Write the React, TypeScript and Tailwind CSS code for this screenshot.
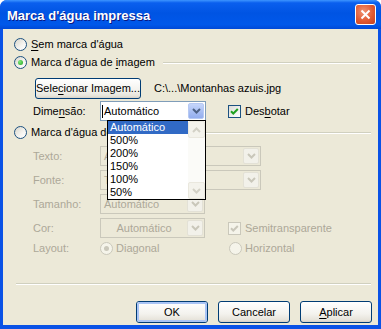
import React from "react";

function Radio({ checked = false, disabled = false }: { checked?: boolean; disabled?: boolean }) {
  return (
    <span
      className={
        disabled
          ? "flex h-[13px] w-[13px] shrink-0 items-center justify-center rounded-full border border-[#cac8bb] bg-[#f5f4ea]"
          : "flex h-[13px] w-[13px] shrink-0 items-center justify-center rounded-full border border-[#1c5180] bg-[linear-gradient(135deg,#d8d5cb,#f6f5f1_60%,#ffffff)]"
      }
    >
      {checked && (
        <span
          className={
            disabled
              ? "h-[5px] w-[5px] rounded-full bg-[#cac8bb]"
              : "h-[5px] w-[5px] rounded-full bg-[radial-gradient(circle_at_35%_35%,#7eea79,#21a121)]"
          }
        />
      )}
    </span>
  );
}

function Check({ disabled = false }: { disabled?: boolean }) {
  return (
    <span
      className={
        disabled
          ? "flex h-[13px] w-[13px] shrink-0 items-center justify-center border border-[#cac8bb] bg-[#f5f4ea]"
          : "flex h-[13px] w-[13px] shrink-0 items-center justify-center border border-[#1c5180] bg-[linear-gradient(135deg,#dcdcd7,#ffffff)]"
      }
    >
      <svg width="11" height="11" viewBox="0 0 11 11">
        <path
          d="M2 5.2 L4.3 7.5 L8.8 3"
          fill="none"
          stroke={disabled ? "#c9c7ba" : "#21a121"}
          strokeWidth="2"
        />
      </svg>
    </span>
  );
}

function Chevron({ color }: { color: string }) {
  return (
    <svg width="9" height="6" viewBox="0 0 9 6">
      <path d="M1 1 L4.5 4.5 L8 1" fill="none" stroke={color} strokeWidth="2" />
    </svg>
  );
}

function ChevronUp({ color }: { color: string }) {
  return (
    <svg width="9" height="6" viewBox="0 0 9 6">
      <path d="M1 5 L4.5 1.5 L8 5" fill="none" stroke={color} strokeWidth="2" />
    </svg>
  );
}

function U({ children }: { children: React.ReactNode }) {
  return <span className="underline underline-offset-[2px] decoration-[1px]">{children}</span>;
}

function XPButton({ children, def = false }: { children: React.ReactNode; def?: boolean }) {
  return (
    <div className="flex h-[22px] w-[72px] items-center justify-center rounded-[3px] border border-[#003c74] bg-[linear-gradient(180deg,#ffffff,#f3f2ed_60%,#e6e3da_90%,#d6d0c5)]">
      <div
        className={
          def
            ? "flex h-full w-full items-center justify-center rounded-[2px] border-[2px] border-[#a9c4f5]"
            : "flex h-full w-full items-center justify-center"
        }
      >
        {children}
      </div>
    </div>
  );
}

export default function App() {
  return (
    <div className="flex h-[329px] w-[381px] flex-col overflow-hidden rounded-t-[7px] bg-[#0a52e6] font-['Liberation_Sans',Arial,sans-serif] text-[11px] leading-[13px] text-black">
      {/* Title bar */}
      <div className="flex h-[29px] shrink-0 items-center bg-[linear-gradient(180deg,#3d95ff_0%,#0a5fee_10%,#0054e3_45%,#0058ea_85%,#0049d6_100%)]">
        <span className="pl-[7px] pt-[1px] text-[13px] font-bold text-white [text-shadow:1px_1px_#0a1883]">
          Marca d'água impressa
        </span>
        <div className="ml-auto mr-[5px] flex h-[21px] w-[21px] items-center justify-center rounded-[3px] border border-white bg-[radial-gradient(circle_at_40%_35%,#f09473,#e15a33_55%,#c2401d)]">
          <svg width="11" height="11" viewBox="0 0 11 11">
            <path d="M1.5 1.5 L9.5 9.5 M9.5 1.5 L1.5 9.5" stroke="white" strokeWidth="2" />
          </svg>
        </div>
      </div>

      {/* Body */}
      <div className="mx-[3px] mb-[4px] flex flex-1 flex-col bg-[#ece9d8] pt-[9px]">
        {/* R1 */}
        <div className="flex h-[13px] items-center pl-[11px]">
          <Radio />
          <span className="ml-[4px]">
            <U>S</U>em marca d'água
          </span>
        </div>
        {/* R2 */}
        <div className="mt-[5px] flex h-[13px] items-center pl-[11px]">
          <Radio checked />
          <span className="ml-[4px] whitespace-nowrap">
            Marca d'água de <U>i</U>magem
          </span>
          <div className="ml-[8px] mr-[7px] h-[2px] flex-1 border-t border-b border-t-[#d0d0bf] border-b-white" />
        </div>
        {/* R3 */}
        <div className="mt-[9px] flex h-[21px] items-center pl-[32px]">
          <div className="flex h-[21px] w-[106px] items-center justify-center rounded-[3px] border border-[#003c74] bg-[linear-gradient(180deg,#ffffff,#f3f2ed_60%,#e6e3da_90%,#d6d0c5)]">
            Sele<U>c</U>ionar Imagem...
          </div>
          <span className="ml-[13px] whitespace-nowrap">C:\...\Montanhas azuis.jpg</span>
        </div>
        {/* R4 */}
        <div className="mt-[2px] flex h-[20px] items-center">
          <div className="w-[97px] pl-[30px]">
            Dime<U>n</U>são:
          </div>
          <div className="relative flex h-[20px] w-[106px] items-center border border-[#7f9db9] bg-white">
            <span className="relative flex-1 pl-[3px]">
              <span className="absolute left-[1px] top-[0px] h-[13px] w-[1px] bg-black" />
              Automático
            </span>
            <div className="mr-[1px] flex h-[16px] w-[16px] items-center justify-center rounded-[2px] border border-[#b6c9f3] bg-[linear-gradient(180deg,#c6d6fb,#a5bcf2_60%,#93aeee)]">
              <Chevron color="#4d6185" />
            </div>
            {/* dropdown list */}
            <div className="absolute left-[6px] top-[18px] z-10 flex h-[80px] w-[99px] border border-black bg-white">
              <div className="flex flex-1 flex-col">
                <div className="h-[13px] bg-[#316ac5] pl-[2px] text-white">Automático</div>
                <div className="h-[13px] pl-[2px]">500%</div>
                <div className="h-[13px] pl-[2px]">200%</div>
                <div className="h-[13px] pl-[2px]">150%</div>
                <div className="h-[13px] pl-[2px]">100%</div>
                <div className="h-[13px] pl-[2px]">50%</div>
              </div>
              <div className="flex w-[17px] flex-col justify-between bg-[#fbfbf8]">
                <div className="flex h-[17px] w-[17px] items-center justify-center rounded-[2px] border border-[#eae8de] bg-[#f4f3ec]">
                  <ChevronUp color="#d3d1c6" />
                </div>
                <div className="flex h-[17px] w-[17px] items-center justify-center rounded-[2px] border border-[#eae8de] bg-[#f4f3ec]">
                  <Chevron color="#d3d1c6" />
                </div>
              </div>
            </div>
          </div>
          <div className="ml-[22px] flex items-center">
            <Check />
            <span className="ml-[4px]">
              Des<U>b</U>otar
            </span>
          </div>
        </div>
        {/* R5 */}
        <div className="mt-[5px] flex h-[13px] items-center pl-[11px]">
          <Radio />
          <span className="ml-[4px] whitespace-nowrap">
            Marca d'água de <U>t</U>exto
          </span>
          <div className="ml-[8px] mr-[7px] h-[2px] flex-1 border-t border-b border-t-[#d0d0bf] border-b-white" />
        </div>
        {/* R6 Texto */}
        <div className="mt-[7px] flex h-[20px] items-center text-[#aca899]">
          <div className="w-[97px] pl-[30px]">Texto:</div>
          <div className="flex h-[20px] w-[161px] items-center border border-[#cac8bb] bg-[#ece9d8]">
            <span className="flex-1 whitespace-nowrap pl-[3px]">ASAP</span>
            <div className="mr-[1px] flex h-[16px] w-[16px] items-center justify-center rounded-[2px] border border-[#e3e1d6] bg-[#f2f1ea]">
              <Chevron color="#c9c7ba" />
            </div>
          </div>
        </div>
        {/* R7 Fonte */}
        <div className="mt-[4px] flex h-[20px] items-center text-[#aca899]">
          <div className="w-[97px] pl-[30px]">Fonte:</div>
          <div className="flex h-[20px] w-[161px] items-center border border-[#cac8bb] bg-[#ece9d8]">
            <span className="flex-1 whitespace-nowrap pl-[3px]">Times New Roman</span>
            <div className="mr-[1px] flex h-[16px] w-[16px] items-center justify-center rounded-[2px] border border-[#e3e1d6] bg-[#f2f1ea]">
              <Chevron color="#c9c7ba" />
            </div>
          </div>
        </div>
        {/* R8 Tamanho */}
        <div className="mt-[4px] flex h-[20px] items-center text-[#aca899]">
          <div className="w-[97px] pl-[30px]">Tamanho:</div>
          <div className="flex h-[20px] w-[105px] items-center border border-[#cac8bb] bg-[#ece9d8]">
            <span className="flex-1 whitespace-nowrap pl-[3px]">Automático</span>
            <div className="mr-[1px] flex h-[16px] w-[16px] items-center justify-center rounded-[2px] border border-[#e3e1d6] bg-[#f2f1ea]">
              <Chevron color="#c9c7ba" />
            </div>
          </div>
        </div>
        {/* R9 Cor */}
        <div className="mt-[4px] flex h-[20px] items-center text-[#aca899]">
          <div className="w-[97px] pl-[30px]">Cor:</div>
          <div className="flex h-[20px] w-[105px] items-center border border-[#cac8bb] bg-[#ece9d8]">
            <span className="flex-1 whitespace-nowrap text-center">Automático</span>
            <div className="mr-[1px] flex h-[16px] w-[16px] items-center justify-center rounded-[2px] border border-[#e3e1d6] bg-[#f2f1ea]">
              <Chevron color="#c9c7ba" />
            </div>
          </div>
          <div className="ml-[23px] flex items-center">
            <Check disabled />
            <span className="ml-[4px]">Semitransparente</span>
          </div>
        </div>
        {/* R10 Layout */}
        <div className="mt-[4px] flex h-[13px] items-center text-[#aca899]">
          <div className="w-[97px] pl-[30px]">Layout:</div>
          <div className="flex w-[129px] items-center">
            <Radio checked disabled />
            <span className="ml-[3px]">Diagonal</span>
          </div>
          <div className="flex items-center">
            <Radio disabled />
            <span className="ml-[3px]">Horizontal</span>
          </div>
        </div>
        {/* separator */}
        <div className="ml-[13px] mr-[7px] mt-[28px] h-[2px] border-t border-b border-t-[#d0d0bf] border-b-white" />
        {/* buttons */}
        <div className="mt-[16px] flex justify-end gap-[10px] pr-[6px]">
          <XPButton def>OK</XPButton>
          <XPButton>Cancelar</XPButton>
          <XPButton>
            <span>
              <U>A</U>plicar
            </span>
          </XPButton>
        </div>
      </div>
    </div>
  );
}
